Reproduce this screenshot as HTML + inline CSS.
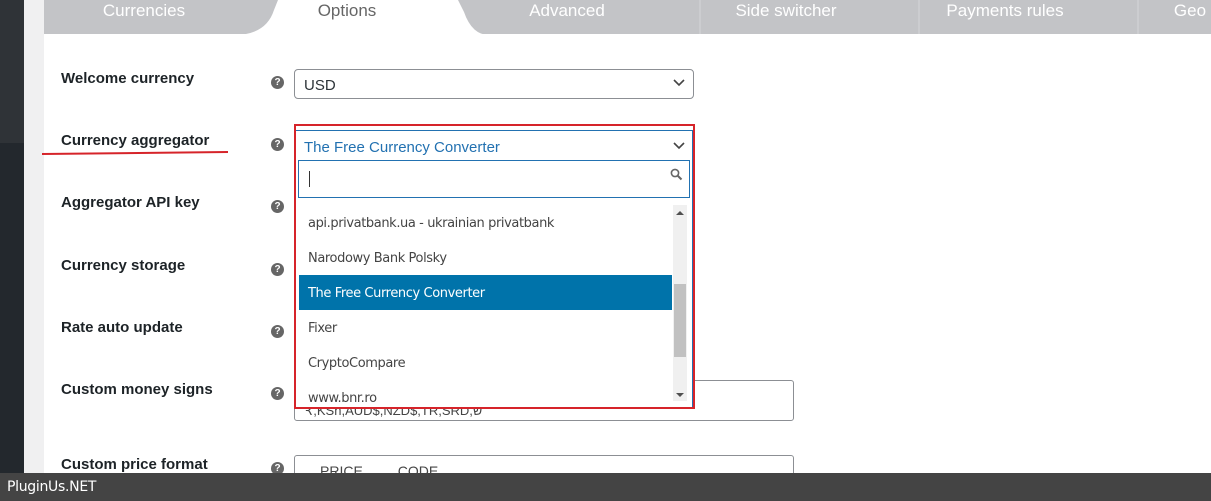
<!DOCTYPE html>
<html><head><style>
*{box-sizing:border-box;margin:0;padding:0}
body{width:1211px;height:501px;overflow:hidden;position:relative;font-family:"Liberation Sans",Arial,sans-serif;background:#fff}
.abs{position:absolute}
.tab{position:absolute;top:0;height:34px;color:#fff;font-size:17px;text-align:center;line-height:22px}
.lbl{position:absolute;left:61px;font-weight:bold;font-size:15px;color:#1d2327}
.q{position:absolute;left:271px;width:13px;height:13px;border-radius:50%;background:#666;color:#fff;font-size:10px;font-weight:bold;text-align:center;line-height:13px}
.opt{position:absolute;left:299px;width:373px;height:35px;line-height:35px;padding-left:9px;font-size:13px;color:#444;font-family:"DejaVu Sans",sans-serif;letter-spacing:-0.4px}
</style></head><body>
<div class="abs" style="left:0;top:0;width:24px;height:143px;background:#2f3337"></div>
<div class="abs" style="left:0;top:143px;width:24px;height:358px;background:#23282d"></div>
<div class="abs" style="left:24px;top:0;width:20px;height:501px;background:#f0f0f1"></div>
<div class="abs" style="left:44px;top:0;width:1167px;height:34px;background:#c3c4c7"></div>
<svg class="abs" style="left:44px;top:0" width="1167" height="35">
<path d="M190 35 Q222 35 230 10 L234 0 L414 0 L420 12 Q428 35 445 35 Z" fill="#fff"/>
<g stroke="#d5d6d8" stroke-width="1"><line x1="656" y1="0" x2="656" y2="34"/><line x1="875" y1="0" x2="875" y2="34"/><line x1="1094" y1="0" x2="1094" y2="34"/></g>
</svg>
<div class="tab" style="left:44px;width:200px">Currencies</div>
<div class="tab" style="left:262px;width:170px;color:#666">Options</div>
<div class="tab" style="left:467px;width:200px">Advanced</div>
<div class="tab" style="left:686px;width:200px">Side switcher</div>
<div class="tab" style="left:905px;width:200px">Payments rules</div>
<div class="tab" style="left:1140px;width:100px">Geo</div>

<div class="lbl" style="top:70px">Welcome currency</div>
<div class="lbl" style="top:132px">Currency aggregator</div>
<div class="abs" style="left:42px;top:152px;width:186px;height:2px;background:#d6242a;transform:rotate(-0.6deg)"></div>
<div class="lbl" style="top:194px">Aggregator API key</div>
<div class="lbl" style="top:257px">Currency storage</div>
<div class="lbl" style="top:319px">Rate auto update</div>
<div class="lbl" style="top:381px">Custom money signs</div>
<div class="lbl" style="top:456px">Custom price format</div>
<div class="q" style="top:76px">?</div>
<div class="q" style="top:138px">?</div>
<div class="q" style="top:200px">?</div>
<div class="q" style="top:263px">?</div>
<div class="q" style="top:325px">?</div>
<div class="q" style="top:387px">?</div>
<div class="q" style="top:462px">?</div>

<div class="abs" style="left:294px;top:69px;width:400px;height:30px;border:1px solid #8c8f94;border-radius:4px;font-size:15px;padding:7px 9px;color:#2c3338">USD</div>
<svg class="abs" style="left:673px;top:79px" width="12" height="8"><path d="M1 1 L6 6 L11 1" stroke="#444" stroke-width="1.6" fill="none"/></svg>

<div class="abs" style="left:294px;top:380px;width:500px;height:41px;border:1px solid #8c8f94;border-radius:3px;font-size:13px;color:#444;padding:22px 10px 0;overflow:hidden;line-height:16px">₹,KSh,AUD$,NZD$,TR,SRD,ש</div>
<div class="abs" style="left:294px;top:455px;width:500px;height:30px;border:1px solid #8c8f94;border-radius:3px;font-size:14px;color:#444;padding:7px 25px">PRICE &nbsp;&nbsp;&nbsp;&nbsp;&nbsp;&nbsp;&nbsp; CODE</div>

<div class="abs" style="left:294px;top:130px;width:400px;height:279px;background:#fff;border:2px solid #2271b1;border-top-width:1px"></div>
<div class="abs" style="left:304px;top:139px;font-size:15px;color:#2271b1">The Free Currency Converter</div>
<svg class="abs" style="left:673px;top:142px" width="12" height="8"><path d="M1 1 L6 6 L11 1" stroke="#444" stroke-width="1.6" fill="none"/></svg>
<div class="abs" style="left:298px;top:160px;width:392px;height:38px;border:1px solid #2271b1;background:#fff"></div>
<div class="abs" style="left:309px;top:171px;width:1px;height:16px;background:#333"></div>
<svg class="abs" style="left:670px;top:168px" width="13" height="13"><circle cx="5" cy="5" r="3.6" stroke="#666" stroke-width="1.6" fill="none"/><path d="M7.5 7.5 L11.5 11.5" stroke="#666" stroke-width="2"/></svg>
<div class="abs" style="left:673px;top:205px;width:14px;height:196px;background:#f0f0f0"></div>
<div class="abs" style="left:674px;top:284px;width:12px;height:73px;background:#c1c1c1"></div>
<svg class="abs" style="left:676px;top:210px" width="8" height="6"><path d="M0 5 L4 1 L8 5Z" fill="#505050"/></svg>
<svg class="abs" style="left:676px;top:392px" width="8" height="6"><path d="M0 1 L4 5 L8 1Z" fill="#505050"/></svg>
<div class="opt" style="top:206px">api.privatbank.ua - ukrainian privatbank</div>
<div class="opt" style="top:241px">Narodowy Bank Polsky</div>
<div class="opt" style="top:275px;background:#0073aa;color:#fff;line-height:37px">The Free Currency Converter</div>
<div class="opt" style="top:311px">Fixer</div>
<div class="opt" style="top:346px">CryptoCompare</div>
<div class="opt" style="top:381px;height:25px;overflow:hidden">www.bnr.ro</div>
<div class="abs" style="left:294px;top:124px;width:401px;height:285px;border:2px solid #d6242a"></div>

<div class="abs" style="left:0;top:473px;width:1211px;height:28px;background:#444;color:#fff;font-size:14px;padding:6px 7px;font-family:'DejaVu Sans',sans-serif;letter-spacing:-0.3px">PluginUs.NET</div>
</body></html>
